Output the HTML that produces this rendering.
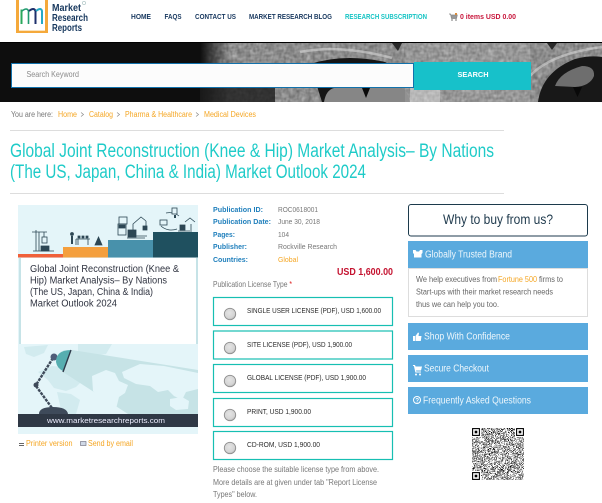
<!DOCTYPE html>
<html lang="en"><head><meta charset="utf-8"><title>Global Joint Reconstruction Market</title>
<style>html,body{margin:0;padding:0;background:#fff;overflow:hidden}svg{display:block}text{font-family:"Liberation Sans",sans-serif}</style></head>
<body>
<svg width="602" height="503" viewBox="0 0 602 503" xmlns="http://www.w3.org/2000/svg">
<defs>
<filter id="fur" x="0" y="0" width="100%" height="100%"><feTurbulence type="fractalNoise" baseFrequency="0.16 0.4" numOctaves="3" seed="4"/><feColorMatrix values="0 0 0 0 1 0 0 0 0 1 0 0 0 0 1 1.5 0 0 0 -0.5"/><feGaussianBlur stdDeviation=".5"/></filter>
<filter id="fur2" x="0" y="0" width="100%" height="100%"><feTurbulence type="fractalNoise" baseFrequency="0.45 0.2" numOctaves="2" seed="9"/><feColorMatrix values="0 0 0 0 0 0 0 0 0 0 0 0 0 0 0 1.6 0 0 0 -0.6"/><feGaussianBlur stdDeviation=".5"/></filter>
<filter id="qr" x="0" y="0" width="100%" height="100%"><feTurbulence type="turbulence" baseFrequency="0.95" numOctaves="1" seed="7"/><feColorMatrix values="0 0 0 0 0 0 0 0 0 0 0 0 0 0 0 7 0 0 0 -1"/><feGaussianBlur stdDeviation=".25"/></filter>
<linearGradient id="fade" x1="0" x2="1" y1="0" y2="0"><stop offset="0" stop-color="#0e0e0e"/><stop offset="1" stop-color="#0e0e0e" stop-opacity="0"/></linearGradient>
<radialGradient id="rb" cx=".45" cy=".4" r=".65"><stop offset="0" stop-color="#e4e4e4"/><stop offset=".7" stop-color="#d4d4d4"/><stop offset="1" stop-color="#a6a6a6"/></radialGradient>
</defs>

<!-- logo -->
<rect x="16" y="0" width="32" height="33" fill="#f5a93b"/>
<rect x="19" y="0" width="26" height="30" fill="#fff"/>
<rect x="19" y="30" width="26" height="1" fill="#fbe3bd"/>
<path d="M21.500 9.500V24" stroke="#2aa85c" stroke-width="2" fill="none"/>
<path d="M22 11q5-4 6.500 0V24" stroke="#1f9a6e" stroke-width="1.600" fill="none"/>
<path d="M29 11q5-4 6.500 0V24" stroke="#1d2f6b" stroke-width="2" fill="none"/>
<path d="M36 11q5-4 6 0V24" stroke="#27a9c4" stroke-width="2" fill="none"/>
<g fill="#15365c" font-weight="700" font-size="10">
<text x="52" y="11" textLength="29" lengthAdjust="spacingAndGlyphs">Market</text>
<text x="52" y="21" textLength="36" lengthAdjust="spacingAndGlyphs">Research</text>
<text x="52" y="31" textLength="30" lengthAdjust="spacingAndGlyphs">Reports</text>
</g>
<circle cx="84" cy="3" r="1.700" fill="none" stroke="#8aa" stroke-width=".5"/>

<!-- nav -->
<g font-weight="700" font-size="7" fill="#17375e">
<text x="131" y="19" textLength="20" lengthAdjust="spacingAndGlyphs">HOME</text>
<text x="164.500" y="19" textLength="17" lengthAdjust="spacingAndGlyphs">FAQS</text>
<text x="195" y="19" textLength="41" lengthAdjust="spacingAndGlyphs">CONTACT US</text>
<text x="249" y="19" textLength="83" lengthAdjust="spacingAndGlyphs">MARKET RESEARCH BLOG</text>
<text x="345" y="19" textLength="82" lengthAdjust="spacingAndGlyphs" fill="#15c4c4">RESEARCH SUBSCRIPTION</text>
<text x="460" y="19" textLength="56" lengthAdjust="spacingAndGlyphs" fill="#c8163c">0 items USD 0.00</text>
</g>
<path d="M449 14h1.500l1 4.500h5l.8-3.500h-6.500" fill="#999" stroke="#888" stroke-width=".7"/><circle cx="452" cy="20" r=".9" fill="#888"/><circle cx="456" cy="20" r=".9" fill="#888"/><rect x="455" y="13" width="2" height="2" fill="#d98a3a"/>

<!-- banner -->
<rect x="0" y="42" width="602" height="60" fill="#0e0e0e"/>
<rect x="200" y="43" width="402" height="59" fill="#8a8a8a"/>
<rect x="200" y="43" width="402" height="59" filter="url(#fur)" opacity=".5"/>
<rect x="200" y="43" width="402" height="59" filter="url(#fur2)" opacity=".4"/>
<rect x="200" y="43" width="30" height="59" fill="url(#fade)"/>
<rect x="200" y="88" width="75" height="14" fill="#1c1c1c" opacity=".8"/>
<!-- left eye -->
<path d="M310 64Q345 53 385 62L400 70V102H322Z" fill="#151515"/>
<path d="M324 102Q326 90 334 88H402Q408 92 410 102Z" fill="#868686"/>
<path d="M362 88h8l-4 10Z" fill="#0a0a0a"/>
<path d="M300 52Q340 44 392 58" stroke="#ddd" stroke-width="2.500" fill="none" opacity=".55"/>
<path d="M392 43l6 8 4-8Z" fill="#2a2a2a"/>
<rect x="410" y="88" width="30" height="14" fill="#ddd" opacity=".45"/>
<rect x="405" y="43" width="125" height="59" fill="#fff" opacity=".1"/>
<!-- right eye -->
<path d="M538 102Q542 72 575 59Q590 55 602 57V102Z" fill="#181818"/>
<path d="M555 86Q560 72 582 66Q595 66 594 76Q590 86 575 87Z" fill="#6e6e6e"/>
<path d="M573 87h9l-4.500 10Z" fill="#090909"/>
<path d="M530 76Q550 54 602 47" stroke="#ddd" stroke-width="2.500" fill="none" opacity=".55"/>
<path d="M547 43l5 7 5-7Z" fill="#2a2a2a"/>
<rect x="0" y="42" width="602" height="1" fill="#000"/>
<!-- search -->
<rect x="11.500" y="63.500" width="402" height="24" fill="#fcfcfc" stroke="#1272ac"/>
<text x="26.500" y="77" font-size="7.800" fill="#8a8a8a" textLength="52.500" lengthAdjust="spacingAndGlyphs">Search Keyword</text>
<rect x="414" y="62" width="117" height="28" fill="#17c1ca"/>
<text x="457.500" y="77" font-size="7.500" font-weight="700" fill="#fff" textLength="31" lengthAdjust="spacingAndGlyphs">SEARCH</text>

<!-- breadcrumb -->
<g font-size="8" fill="#f5a623">
<text x="11" y="117" textLength="42" lengthAdjust="spacingAndGlyphs" fill="#777">You are here:</text>
<text x="58" y="117" textLength="19" lengthAdjust="spacingAndGlyphs">Home</text>
<text x="89" y="117" textLength="24" lengthAdjust="spacingAndGlyphs">Catalog</text>
<text x="125" y="117" textLength="67" lengthAdjust="spacingAndGlyphs">Pharma &amp; Healthcare</text>
<text x="204" y="117" textLength="52" lengthAdjust="spacingAndGlyphs">Medical Devices</text>
</g>
<path d="M81 112.500l2.500 2-2.500 2M117 112.500l2.500 2-2.500 2M196 112.500l2.500 2-2.500 2" fill="none" stroke="#888" stroke-width=".7"/>

<!-- title -->
<rect x="10" y="130" width="494" height="1" fill="#ddd"/>
<g font-size="19" fill="#1fcbc8">
<text x="10" y="157" textLength="484" lengthAdjust="spacingAndGlyphs">Global Joint Reconstruction (Knee &amp; Hip) Market Analysis– By Nations</text>
<text x="10" y="178" textLength="356" lengthAdjust="spacingAndGlyphs">(The US, Japan, China &amp; India) Market Outlook 2024</text>
</g>
<rect x="10" y="193" width="494" height="1" fill="#ddd"/>

<!-- cover image -->
<rect x="18" y="205" width="180" height="229" fill="#e4f5f9"/>
<rect x="18" y="254" width="45" height="3.500" fill="#f0603a"/>
<rect x="63" y="247" width="45" height="10.500" fill="#f49f3d"/>
<rect x="108" y="240" width="45" height="17.500" fill="#4891ab"/>
<rect x="153" y="232" width="45" height="25.500" fill="#1f505f"/>
<!-- pictograms -->
<g stroke="#2c4754" fill="none" stroke-width=".8">
<path d="M33 251h21M36 251V230M39 251V232M32 232h15M44 232v5"/><rect x="42" y="237" width="5" height="6" fill="#e4f5f9"/><rect x="41" y="246" width="8" height="5" fill="#2c4754"/>
<path d="M76 245v-6M76 239h14M78 239v6M88 239v6"/><circle cx="72" cy="234" r="1.500" fill="#2c4754"/><path d="M72 236v8" stroke-width="2"/>
<path d="M78 238v-2h2v2zM82 238v-2h2v2zM86 238v-2h2v2z" fill="#2c4754"/><path d="M98.500 237l-3.500 8h7z" fill="#2c4754"/>
<rect x="119" y="217" width="8" height="7" fill="#e4f5f9"/><rect x="118" y="224" width="8" height="11" fill="#e4f5f9"/><rect x="119" y="225" width="6" height="3" fill="#2c4754"/>
<path d="M131 236h16M127 238h18M133 236V224l8-7 5 4M146 221v5"/><rect x="128" y="230" width="8" height="7" fill="#2c4754"/><rect x="143" y="226" width="4" height="4" fill="#2c4754"/>
<path d="M161 226a14 12 0 0 0 16 3M166 213a14 12 0 0 1 13 3"/><rect x="172" y="208" width="5" height="6" fill="#e4f5f9"/><rect x="160" y="220" width="7" height="5" fill="#e4f5f9"/><rect x="180" y="225" width="5" height="5" fill="#2c4754"/><path d="M178 231h14M185 222l5-4 5 4M191 224v6"/><path d="M175 215v3" stroke-width="2"/>
</g>
<rect x="19" y="258" width="178" height="86" fill="#fff"/>
<rect x="19" y="258" width="2" height="86" fill="#c6e3e7"/><rect x="196" y="258" width="2" height="86" fill="#c6e3e7"/>
<g font-size="10" fill="#2f3340">
<text x="30" y="272" textLength="149" lengthAdjust="spacingAndGlyphs">Global Joint Reconstruction (Knee &amp;</text>
<text x="30" y="283.500" textLength="137" lengthAdjust="spacingAndGlyphs">Hip) Market Analysis– By Nations</text>
<text x="30" y="295" textLength="123" lengthAdjust="spacingAndGlyphs">(The US, Japan, China &amp; India)</text>
<text x="30" y="306.500" textLength="87" lengthAdjust="spacingAndGlyphs">Market Outlook 2024</text>
</g>
<!-- map + lamp -->
<g fill="#d2ebef">
<path d="M38 372l14-6 14 1 14 4 4 8-8 8-10 4-12-3-6-8z"/><path d="M57 392l14 2 9 6-4 14H62z"/><path d="M24 347l24-2-4 8-10 4-8-3z"/><path d="M78 344h34l-6 10-14 2-14-4z"/>
</g>
<path d="M72 350L198 370V414H128L63 372Z" fill="#c6e3e6"/>
<g fill="#e4f5f9">
<path d="M92 376l14-6 9 3 4 8 9 4-3 8-6 4-3 12-8 4-6-12-9-10z"/>
<path d="M122 372l18-8 24 2 34 7v16l-12 3-4 8-8-4-6-6-10 2-8-6-14-2-12-6z"/>
<path d="M170 399l12-2 7 4-1 8-12 1-6-4z"/>
</g>
<path d="M53 358L36 385" stroke="#3e4a5a" stroke-width="2.400" stroke-dasharray="3 1"/>
<path d="M36 386L52 408" stroke="#3e4a5a" stroke-width="2.400" stroke-dasharray="3 1"/>
<circle cx="36" cy="385" r="2.500" fill="#3e4a5a"/>
<circle cx="54" cy="357" r="3.500" fill="#4f5c78"/>
<path d="M71 350Q56 350 56 362Q57 368 63 371Z" fill="#56aeb0"/>
<path d="M71 350L63 372" stroke="#2d3a4a" stroke-width="1.400"/>
<path d="M39 414q0-7 14-7t15 7z" fill="#3e4a5a"/>
<rect x="18" y="414" width="180" height="13" fill="#2f3845"/>
<text x="47" y="423" font-size="7.500" fill="#eef" textLength="118" lengthAdjust="spacingAndGlyphs">www.marketresearchreports.com</text>

<!-- print/email -->
<path d="M19 443.500h5M19 445.500h5" stroke="#666" stroke-width=".9"/>
<rect x="80.500" y="441.500" width="5.500" height="4" fill="#cfd8e6" stroke="#667" stroke-width=".6"/>
<g font-size="8" fill="#f5a623">
<text x="26" y="446" textLength="46.500" lengthAdjust="spacingAndGlyphs">Printer version</text>
<text x="88" y="446" textLength="45" lengthAdjust="spacingAndGlyphs">Send by email</text>
</g>

<!-- details -->
<g font-size="7.500" font-weight="700" fill="#1f7fbc">
<text x="213" y="212" textLength="50" lengthAdjust="spacingAndGlyphs">Publication ID:</text>
<text x="213" y="224" textLength="58" lengthAdjust="spacingAndGlyphs">Publication Date:</text>
<text x="213" y="237" textLength="22" lengthAdjust="spacingAndGlyphs">Pages:</text>
<text x="213" y="249" textLength="34" lengthAdjust="spacingAndGlyphs">Publisher:</text>
<text x="213" y="262" textLength="35" lengthAdjust="spacingAndGlyphs">Countries:</text>
</g>
<g font-size="7.500" fill="#777">
<text x="278" y="212" textLength="40" lengthAdjust="spacingAndGlyphs">ROC0618001</text>
<text x="278" y="224" textLength="42" lengthAdjust="spacingAndGlyphs">June 30, 2018</text>
<text x="278" y="237" textLength="11" lengthAdjust="spacingAndGlyphs">104</text>
<text x="278" y="249" textLength="59" lengthAdjust="spacingAndGlyphs">Rockville Research</text>
<text x="278" y="262" textLength="20" lengthAdjust="spacingAndGlyphs" fill="#f5a623">Global</text>
</g>
<text x="337" y="275" font-size="10" font-weight="700" fill="#c4122f" textLength="56" lengthAdjust="spacingAndGlyphs">USD 1,600.00</text>
<text x="213" y="287" font-size="8" fill="#777" textLength="79" lengthAdjust="spacingAndGlyphs">Publication License Type <tspan fill="#d22">*</tspan></text>

<g fill="#fff" stroke="#17bfb2" stroke-width="1.200">
<rect x="213.500" y="297.500" width="179" height="28"/>
<rect x="213.500" y="331" width="179" height="28"/>
<rect x="213.500" y="364.500" width="179" height="28"/>
<rect x="213.500" y="398.500" width="179" height="28"/>
<rect x="213.500" y="431.500" width="179" height="28"/>
</g>
<g fill="url(#rb)" stroke="#8f8f8f" stroke-width=".9">
<circle cx="230" cy="314" r="5.700"/><circle cx="230" cy="348" r="5.700"/><circle cx="230" cy="381" r="5.700"/><circle cx="230" cy="415" r="5.700"/><circle cx="230" cy="448" r="5.700"/>
</g>
<g font-size="7.500" fill="#2a2a2a">
<text x="247" y="313" textLength="134" lengthAdjust="spacingAndGlyphs">SINGLE USER LICENSE (PDF), USD 1,600.00</text>
<text x="247" y="347" textLength="105" lengthAdjust="spacingAndGlyphs">SITE LICENSE (PDF), USD 1,900.00</text>
<text x="247" y="380" textLength="119" lengthAdjust="spacingAndGlyphs">GLOBAL LICENSE (PDF), USD 1,900.00</text>
<text x="247" y="414" textLength="64" lengthAdjust="spacingAndGlyphs">PRINT, USD 1,900.00</text>
<text x="247" y="447" textLength="73" lengthAdjust="spacingAndGlyphs">CD-ROM, USD 1,900.00</text>
</g>
<g font-size="7.800" fill="#777">
<text x="213" y="472" textLength="166" lengthAdjust="spacingAndGlyphs">Please choose the suitable license type from above.</text>
<text x="213" y="485" textLength="164" lengthAdjust="spacingAndGlyphs">More details are at given under tab "Report License</text>
<text x="213" y="497" textLength="44" lengthAdjust="spacingAndGlyphs">Types" below.</text>
</g>

<!-- right column -->
<rect x="408.500" y="204.500" width="179" height="31.500" rx="2.500" fill="#fff" stroke="#1c3a4c"/>
<text x="443" y="224" font-size="14" fill="#1f3a4d" textLength="110" lengthAdjust="spacingAndGlyphs">Why to buy from us?</text>
<rect x="408" y="241" width="180" height="27" fill="#5aaade"/>
<rect x="408.500" y="268.500" width="179" height="48" fill="#fff" stroke="#ddd"/>
<rect x="408" y="323" width="180" height="27" fill="#5aaade"/>
<rect x="408" y="355" width="180" height="27" fill="#5aaade"/>
<rect x="408" y="387" width="180" height="27" fill="#5aaade"/>
<g font-size="10" fill="#eef7fc">
<text x="425" y="257.500" textLength="87" lengthAdjust="spacingAndGlyphs">Globally Trusted Brand</text>
<text x="424" y="339.500" textLength="86" lengthAdjust="spacingAndGlyphs">Shop With Confidence</text>
<text x="424" y="371.500" textLength="65" lengthAdjust="spacingAndGlyphs">Secure Checkout</text>
<text x="423" y="403.500" textLength="108" lengthAdjust="spacingAndGlyphs">Frequently Asked Questions</text>
</g>
<g fill="#fff">
<path d="M413 250h2.500l1 1.500h2.500l1-1.500h2.500v3l-1 1v3.500h-7.500V254l-1-1z"/>
<path d="M413 336h2v5h-2zM415.500 336l2.500-3.500 1 .5-.5 3h3l-.7 5h-5.300z"/>
<path d="M413 365h2l.6 1.500h6.400l-1 4h-5l.3 1h4.700v1h-5.600l-1.500-6.500h-1z"/><circle cx="416" cy="374.500" r="1"/><circle cx="420" cy="374.500" r="1"/>
</g>
<circle cx="417" cy="400" r="3.500" fill="none" stroke="#fff" stroke-width="1"/><text x="415.400" y="402.300" font-size="6" font-weight="700" fill="#fff">?</text>
<g font-size="7.800" fill="#666">
<text x="416" y="282" textLength="81" lengthAdjust="spacingAndGlyphs">We help executives from</text>
<text x="498" y="282" textLength="39" lengthAdjust="spacingAndGlyphs" fill="#f5a623">Fortune 500</text>
<text x="539" y="282" textLength="24" lengthAdjust="spacingAndGlyphs">firms to</text>
<text x="416" y="294.500" textLength="137" lengthAdjust="spacingAndGlyphs">Start-ups with their market research needs</text>
<text x="416" y="307" textLength="83" lengthAdjust="spacingAndGlyphs">thus we can help you too.</text>
</g>

<!-- QR -->
<rect x="472" y="428" width="52" height="52" fill="#fff"/>
<rect x="472" y="428" width="52" height="52" filter="url(#qr)"/>
<g>
<rect x="472" y="428" width="9" height="9" fill="#fff"/><rect x="472.600" y="428.600" width="6.800" height="6.800" fill="#fff" stroke="#000" stroke-width="1.100"/><rect x="474.700" y="430.700" width="2.600" height="2.600"/>
<rect x="515" y="428" width="9" height="9" fill="#fff"/><rect x="516.600" y="428.600" width="6.800" height="6.800" fill="#fff" stroke="#000" stroke-width="1.100"/><rect x="518.700" y="430.700" width="2.600" height="2.600"/>
<rect x="472" y="471" width="9" height="9" fill="#fff"/><rect x="472.600" y="472.600" width="6.800" height="6.800" fill="#fff" stroke="#000" stroke-width="1.100"/><rect x="474.700" y="474.700" width="2.600" height="2.600"/>
</g>
</svg>
</body></html>
